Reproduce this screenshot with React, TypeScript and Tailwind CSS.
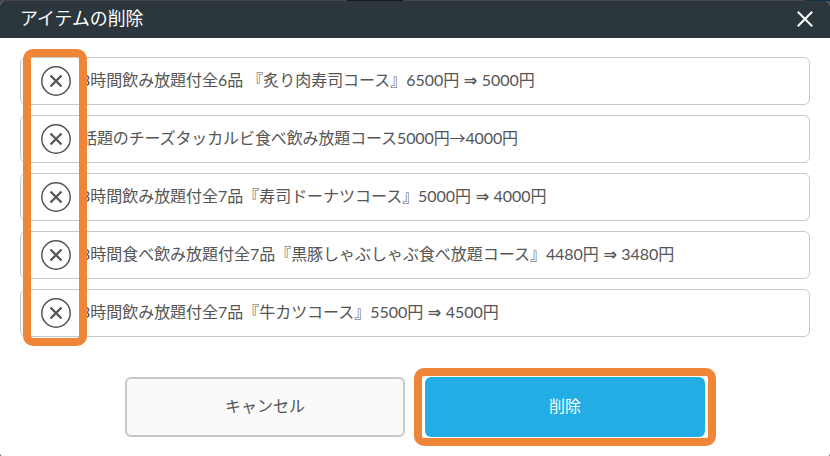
import React from 'react';

type ItemProps = {
  name: string;
  price: string;
  arrow: '⇒' | '→';
  newPrice: string;
}

const items: ItemProps[] = [
  { name: '3時間飲み放題付全6品 『炙り肉寿司コース』', price: '6500円', arrow: '⇒', newPrice: '5000円' },
  { name: '話題のチーズタッカルビ食べ飲み放題コース', price: '5000円', arrow: '→', newPrice: '4000円' },
  { name: '3時間飲み放題付全7品『寿司ドーナツコース』', price: '5000円', arrow: '⇒', newPrice: '4000円' },
  { name: '3時間食べ飲み放題付全7品『黒豚しゃぶしゃぶ食べ放題コース』', price: '4480円', arrow: '⇒', newPrice: '3480円' },
  { name: '3時間飲み放題付全7品『牛カツコース』', price: '5500円', arrow: '⇒', newPrice: '4500円' },
];

function RemoveIcon() {
  return (
    <svg className="size-8 shrink-0" viewBox="0 0 32 32" fill="none" stroke="#555">
      <circle cx="16" cy="16" r="14.2" strokeWidth="1.5" />
      <path d="M10.5 10.5l11 11M21.5 10.5l-11 11" strokeWidth="2.3" />
    </svg>
  );
}

function ItemRow({ name, price, arrow, newPrice }: ItemProps) {
  return (
    <li className="flex h-12 items-center rounded-md border border-[#c8c8c8] pl-[19px]">
      <button type="button" aria-label="削除">
        <RemoveIcon />
      </button>
      {arrow === '⇒' ? (
        <span className="ml-[9px] -mt-[3px] whitespace-pre text-base leading-6 tracking-[-0.03px]">
          {name}{price}
          <span className="inline-flex w-[22.5px] justify-center font-['DejaVu_Sans'] font-bold leading-none">⇒</span>
          {newPrice}
        </span>
      ) : (
        <span className="ml-[9px] -mt-[3px] whitespace-pre text-base leading-6 tracking-[-0.12px]">
          {name}{price}
          <span className="font-['Noto_Sans_CJK_JP'] leading-none">→</span>
          {newPrice}
        </span>
      )}
    </li>
  );
}

export default function App() {
  return (
    <div className="h-[456px] w-[830px] overflow-hidden bg-[#454545] font-['Lato','Noto_Sans_CJK_JP',sans-serif] text-[#555]">
      {/* Page behind the dialog */}
      <div className="flex h-px">
        <div className="w-[347px] bg-[#454545]" />
        <div className="w-14 bg-[#181818]" />
        <div className="flex-1 bg-[#484848]" />
        <div className="w-[25px] bg-[#0d3345]" />
      </div>

      <div className="h-[457px] overflow-hidden rounded-[5px] bg-white">
        <header className="flex h-[37px] items-center justify-between bg-[#2b373c] pl-5 pr-[17px] text-white">
          <h1 className="-mt-1 text-[17.9px] leading-6">アイテムの削除</h1>
          <button type="button" aria-label="閉じる" className="-mt-px">
            <svg className="size-4" viewBox="0 0 16 16" fill="none" stroke="currentColor" strokeWidth="2">
              <path d="M.8.8l14.4 14.4M15.2.8L.8 15.2" />
            </svg>
          </button>
        </header>

        <div className="relative px-5 pt-[19px]">
          <ul className="flex flex-col gap-2.5">
            {items.map((item) => (
              <ItemRow key={item.name} {...item} />
            ))}
          </ul>
          <div className="pointer-events-none absolute left-[23px] top-[11px] h-[297px] w-16 rounded-[10px] border-8 border-[#ee8537]" />
        </div>

        <div className="mt-10 flex justify-center gap-5">
          <button type="button" className="h-[60px] w-[280px] rounded-md border-2 border-[#c8c8c8] bg-[#fafafa] pb-0.5 text-base">
            キャンセル
          </button>
          <div className="relative">
            <button type="button" className="h-[60px] w-[280px] rounded-md bg-[#22ade5] pb-0.5 text-base text-white">
              削除
            </button>
            <div className="pointer-events-none absolute -left-[11px] -top-[9px] h-[78px] w-[302px] rounded-[10px] border-8 border-[#ee8537]" />
          </div>
        </div>
      </div>
    </div>
  );
}
